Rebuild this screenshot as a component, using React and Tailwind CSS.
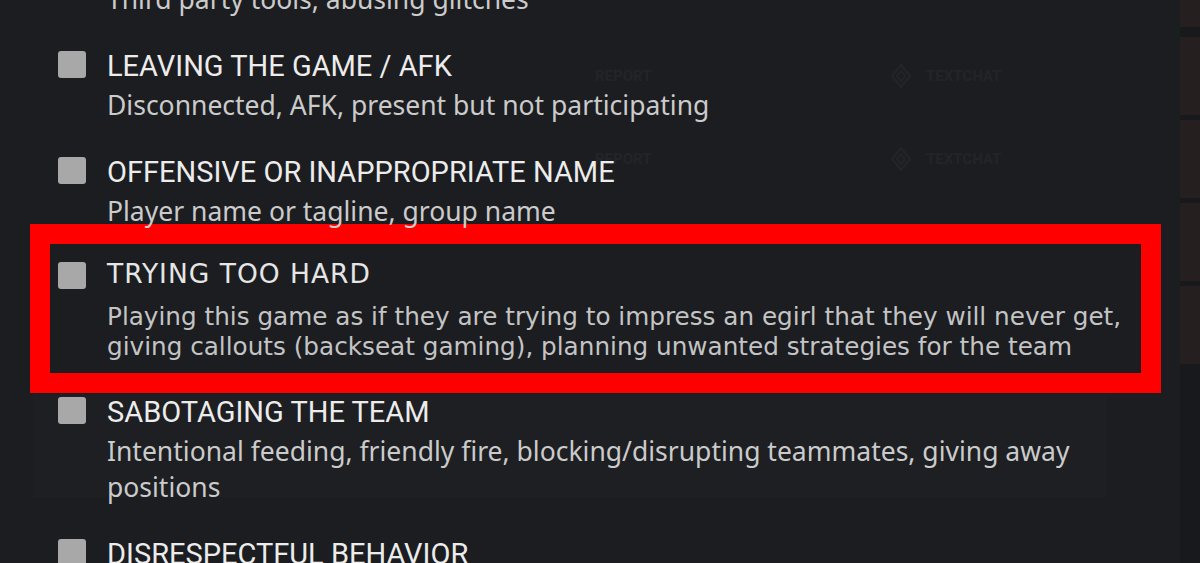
// Report-player modal over the in-game scoreboard
const TITLE = { fontFamily: "Roboto, 'Liberation Sans', sans-serif" };
const DESC = { fontFamily: "'Noto Sans', 'Open Sans', sans-serif" };
const EDIT = { fontFamily: "'DejaVu Sans', Verdana, sans-serif" };

const reasons = [
  {
    title: "LEAVING THE GAME / AFK",
    desc: ["Disconnected, AFK, present but not participating"],
  },
  {
    title: "OFFENSIVE OR INAPPROPRIATE NAME",
    desc: ["Player name or tagline, group name"],
  },
  {
    title: "TRYING TOO HARD",
    desc: [
      "Playing this game as if they are trying to impress an egirl that they will never get,",
      "giving callouts (backseat gaming), planning unwanted strategies for the team",
    ],
    highlight: true,
  },
  {
    title: "SABOTAGING THE TEAM",
    desc: [
      "Intentional feeding, friendly fire, blocking/disrupting teammates, giving away",
      "positions",
    ],
  },
  { title: "DISRESPECTFUL BEHAVIOR", desc: [] },
];

function Box() {
  return <div className="w-[28px] h-[27px] shrink-0 rounded-[3px] bg-[#a8a8a8]" />;
}

function Reason({ r }) {
  return (
    <div className="flex gap-[21px] mb-[31px]">
      <div className="mt-[3px]">
        <Box />
      </div>
      <div>
        <div style={TITLE} className="text-[29px] leading-[36px] text-[#ececec] whitespace-nowrap">
          {r.title}
        </div>
        {r.desc.length > 0 && (
          <div style={DESC} className="mt-[3px] text-[26.5px] leading-[36px] text-[#cbcbcb] whitespace-nowrap">
            {r.desc.map((l) => (
              <div key={l}>{l}</div>
            ))}
          </div>
        )}
      </div>
    </div>
  );
}

// the edited entry, framed in red
function Highlighted({ r }) {
  return (
    <div className="mt-[-36px] mb-[1px] w-[1131px] border-[20px] border-[#ff0000] bg-[#1b1d21] pl-[8px] pt-[13px] pb-[11px] flex gap-[21px]">
      <div className="mt-[5px]">
        <Box />
      </div>
      <div style={EDIT}>
        <div className="text-[26.5px] leading-[33px] tracking-[1px] text-[#e6e6e6] whitespace-nowrap">{r.title}</div>
        <div className="mt-[12px] text-[24.7px] leading-[30px] text-[#c4c4c4] whitespace-nowrap">
          {r.desc.map((l) => (
            <div key={l}>{l}</div>
          ))}
        </div>
      </div>
    </div>
  );
}

function Diamond() {
  return (
    <svg width="22" height="26" viewBox="0 0 22 26" fill="none" stroke="currentColor" strokeWidth="2">
      <path d="M11 2 L20 13 L11 24 L2 13 Z" />
      <path d="M11 8 L15 13 L11 18 L7 13 Z" />
    </svg>
  );
}

function ScoreRow({ label = true }) {
  return (
    <div className="h-[78px] bg-[#251f20] flex items-center text-[#9c9c9c] font-bold text-[15px]" style={TITLE}>
      {label && (
        <>
          <span className="ml-[595px] w-[295px]">REPORT</span>
          <Diamond />
          <span className="ml-[14px]">TEXTCHAT</span>
        </>
      )}
    </div>
  );
}

export default function App() {
  return (
    <div className="relative w-[1200px] h-[563px] overflow-hidden bg-[#17191c]">
      {/* scoreboard behind */}
      <div className="flex flex-col gap-[5px]">
        <div className="h-[27px] mb-[5px] bg-[#251f20]" />
        <ScoreRow />
        <ScoreRow />
        <ScoreRow label={false} />
        <ScoreRow label={false} />
        <div className="ml-[33px] mt-[26px] w-[1074px] h-[102px] bg-[#3c3f46]" />
      </div>

      {/* report modal */}
      <div className="absolute left-0 top-0 w-[1180px] h-full bg-[#1b1d21]/95 pl-[30px]">
        <div className="pl-[28px] mt-[-19px] mb-[31px]">
          <div style={DESC} className="ml-[49px] text-[26.5px] leading-[36px] text-[#cbcbcb] whitespace-nowrap">
            Third party tools, abusing glitches
          </div>
        </div>
        {reasons.map((r) =>
          r.highlight ? (
            <Highlighted key={r.title} r={r} />
          ) : (
            <div key={r.title} className="pl-[28px]">
              <Reason r={r} />
            </div>
          )
        )}
      </div>
    </div>
  );
}
